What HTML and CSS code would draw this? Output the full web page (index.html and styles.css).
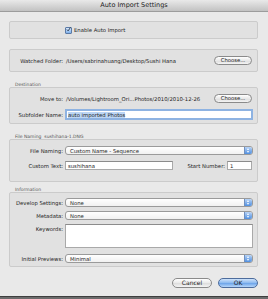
FILE: index.html
```html
<!DOCTYPE html>
<html lang="en">
<head>
    <meta charset="UTF-8">
    <meta name="viewport" content="width=device-width, initial-scale=1.0">
    <title>Auto Import Settings</title>
    <link rel="stylesheet" href="styles.css">
</head>
<body>

<div class="window">
    <div class="titlebar">Auto Import Settings</div>

    <div class="content">
        <div class="box box-enable">
            <label class="check">
                <span class="checkbox">
                    <svg width="7" height="7" viewBox="0 0 7 7"><path d="M1.3 3.6 L3 5.4 L6.2 0.8" fill="none" stroke="#1d2a3a" stroke-width="1.2"/></svg>
                </span>
                Enable Auto Import
            </label>
        </div>

        <div class="box box-watched">
            <div class="row">
                <span class="label">Watched Folder:</span>
                <span class="value">/Users/sabrinahuang/Desktop/Sushi Hana</span>
                <button class="btn btn-choose">Choose...</button>
            </div>
        </div>

        <div class="section-title">Destination</div>
        <div class="box box-dest">
            <div class="row">
                <span class="label">Move to:</span>
                <span class="value">/Volumes/Lightroom_Ori...Photos/2010/2010-12-26</span>
                <button class="btn btn-choose">Choose...</button>
            </div>
            <div class="row row-gap">
                <span class="label">Subfolder Name:</span>
                <div class="input input-focus"><span class="selected">auto imported Photos</span></div>
            </div>
        </div>

        <div class="section-title">File Naming &nbsp;sushihana-1.DNG</div>
        <div class="box box-naming">
            <div class="row">
                <span class="label">File Naming:</span>
                <div class="select">Custom Name - Sequence<span class="arrows"></span></div>
            </div>
            <div class="row row-gap">
                <span class="label">Custom Text:</span>
                <div class="input input-text">sushihana</div>
                <span class="label label-start">Start Number:</span>
                <div class="input input-number">1</div>
            </div>
        </div>

        <div class="section-title title-info">Information</div>
        <div class="box box-info">
            <div class="row">
                <span class="label">Develop Settings:</span>
                <div class="select">None<span class="arrows"></span></div>
            </div>
            <div class="row row-small">
                <span class="label">Metadata:</span>
                <div class="select">None<span class="arrows"></span></div>
            </div>
            <div class="row row-small row-top">
                <span class="label">Keywords:</span>
                <div class="textarea"></div>
            </div>
            <div class="row row-gap">
                <span class="label">Initial Previews:</span>
                <div class="select">Minimal<span class="arrows"></span></div>
            </div>
        </div>

        <div class="buttons">
            <button class="btn btn-big">Cancel</button>
            <button class="btn btn-big btn-ok">OK</button>
        </div>
    </div>
</div>

</body>
</html>
```

FILE: styles.css
```css
body {
    margin: 0;
    background-color: #6c6c6c;
    font-family: "DejaVu Sans", sans-serif;
    color: #1e1e1e;
}

.window {
    width: 268px;
    height: 296px;
    background-color: #e9e9e9;
    border-bottom: 1px solid #3e3e3e;
    display: flex;
    flex-direction: column;
}

.titlebar {
    height: 11px;
    line-height: 11px;
    border-bottom: 1px solid #9c9c9c;
    background: linear-gradient(#e9e9e9, #c2c2c2);
    text-align: center;
    font-size: 6.5px;
    color: #222;
}

.content {
    padding: 0 10px 0 9px;
    display: flex;
    flex-direction: column;
}

.box {
    box-sizing: border-box;
    background-color: #e1e1e1;
    border: 1px solid #cbcbcb;
    border-radius: 2px;
    padding-right: 4px;
}

.box-enable {
    margin-top: 9px;
    height: 18px;
    display: flex;
    align-items: center;
    padding-left: 55px;
}

.check {
    display: flex;
    align-items: center;
    font-size: 5.3px;
}

.checkbox {
    width: 7px;
    height: 7px;
    box-sizing: border-box;
    border: 1px solid #5b7aa6;
    border-radius: 1px;
    background: linear-gradient(#d7e7fa, #7fb0ea);
    margin-right: 2px;
    display: flex;
    align-items: center;
    justify-content: center;
}

.checkbox svg {
    margin-top: -1px;
}

.box-watched {
    margin-top: 10px;
    height: 23px;
    display: flex;
    align-items: center;
}

.box-watched .row {
    flex: 1;
}

.row {
    display: flex;
    align-items: center;
    font-size: 5.3px;
}

.row-gap {
    margin-top: 6px;
}

.row-small {
    margin-top: 4px;
}

.row-top {
    align-items: flex-start;
}

.row-top .label {
    margin-top: 2px;
}

.label {
    width: 53px;
    margin-right: 2px;
    text-align: right;
    white-space: nowrap;
    flex-shrink: 0;
}

.value {
    flex: 1;
    padding-left: 1px;
    white-space: nowrap;
}

.section-title {
    margin-top: 10px;
    height: 5px;
    line-height: 5px;
    padding-left: 6px;
    font-size: 4.5px;
    color: #555;
    white-space: pre;
}

.title-info {
    margin-top: 5px;
}

.box-dest {
    height: 37px;
    padding-top: 6px;
}

.box-naming {
    height: 43px;
    padding-top: 6px;
}

.box-info {
    height: 75px;
    padding-top: 5px;
}

.btn {
    font-family: "DejaVu Sans", sans-serif;
    color: #1e1e1e;
    box-sizing: border-box;
    border: 1px solid #8a8a8a;
    background: linear-gradient(#ffffff, #e9e9e9 50%, #dcdcdc 51%, #f4f4f4);
    padding: 0;
    cursor: pointer;
}

.btn-choose {
    width: 38px;
    height: 9px;
    border-radius: 5px;
    font-size: 5.3px;
    line-height: 7px;
    margin-right: 1px;
}

.input {
    box-sizing: border-box;
    height: 9px;
    background-color: #fff;
    border: 1px solid #a9a9a9;
    border-top-color: #8c8c8c;
    padding-left: 2px;
    display: flex;
    align-items: center;
    white-space: nowrap;
}

.input-focus {
    flex: 1;
    height: 11px;
    border: 2px solid #8eb3e2;
    padding-left: 1px;
}

.selected {
    background-color: #bcd6f5;
}

.input-text {
    width: 108px;
}

.label-start {
    width: 52px;
}

.input-number {
    width: 25px;
    margin-right: 1px;
}

.select {
    flex: 1;
    box-sizing: border-box;
    height: 9px;
    border: 1px solid #9a9a9a;
    border-radius: 3px;
    background: linear-gradient(#ffffff, #f1f1f1);
    padding-left: 4px;
    display: flex;
    align-items: center;
    overflow: hidden;
}

.arrows {
    margin-left: auto;
    width: 7px;
    height: 7px;
    border-left: 1px solid #6f8fc0;
    background: linear-gradient(#b8d3f5, #4f8fe0);
    position: relative;
}

.arrows::before,
.arrows::after {
    content: "";
    position: absolute;
    left: 2px;
    border-left: 1.5px solid transparent;
    border-right: 1.5px solid transparent;
}

.arrows::before {
    top: 1px;
    border-bottom: 2px solid #fff;
}

.arrows::after {
    bottom: 1px;
    border-top: 2px solid #fff;
}

.textarea {
    flex: 1;
    height: 24px;
    box-sizing: border-box;
    background-color: #fff;
    border: 1px solid #a9a9a9;
    border-top-color: #8c8c8c;
}

.buttons {
    margin-top: 11px;
    display: flex;
    justify-content: flex-end;
    gap: 6px;
}

.btn-big {
    width: 40px;
    height: 10px;
    border-radius: 5px;
    font-size: 6px;
    line-height: 8px;
}

.btn-ok {
    border-color: #4d6c9c;
    background: linear-gradient(#cfe3fa, #8ab8ef 50%, #6aa2e8 51%, #b6d6fa);
}
```
